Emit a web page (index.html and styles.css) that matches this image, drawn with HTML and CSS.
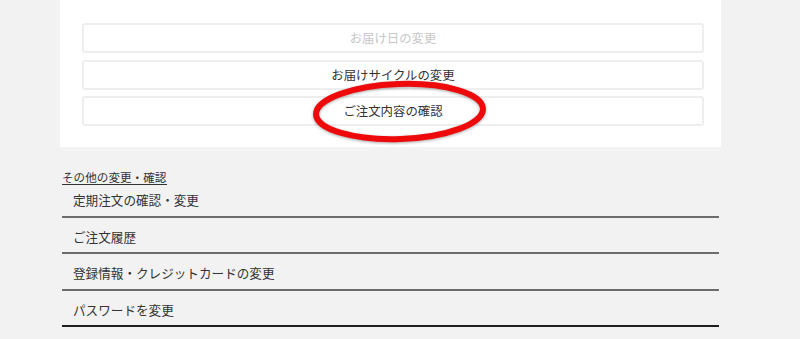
FILE: index.html
```html
<!DOCTYPE html>
<html lang="ja">
<head>
<meta charset="utf-8">
<title>定期注文</title>
<link rel="stylesheet" href="styles.css">
</head>
<body>
<div class="page">
  <div class="card">
    <div class="btn btn-disabled">お届け日の変更</div>
    <div class="btn btn-2">お届けサイクルの変更</div>
    <div class="btn btn-3">ご注文内容の確認</div>
  </div>
  <section class="other">
    <h2 class="other-title">その他の変更・確認</h2>
    <ul class="other-list">
      <li class="other-item">定期注文の確認・変更</li>
      <li class="other-item">ご注文履歴</li>
      <li class="other-item">登録情報・クレジットカードの変更</li>
      <li class="other-item other-item-last">パスワードを変更</li>
    </ul>
  </section>
  <svg class="mark" width="190" height="72" viewBox="0 0 190 72" aria-hidden="true">
    <ellipse cx="94.5" cy="33.5" rx="83.5" ry="27.5" fill="none" stroke="#ee0a0a" stroke-width="6" transform="rotate(-2 94.5 33.5)"/>
  </svg>
</div>
</body>
</html>
```
FILE: styles.css
```css
html, body {
  margin: 0;
  padding: 0;
  background: #f2f2f2;
}
body {
  font-family: "Noto Sans CJK JP", "Noto Sans", sans-serif;
  color: #333;
}
.page {
  position: relative;
  width: 661px;
  margin-left: 60px;
}
.card {
  background: #fff;
  padding: 23px 17px 21px 22px;
  display: flex;
  flex-direction: column;
}
.btn {
  box-sizing: border-box;
  height: 30px;
  border: 2px solid #eeeeee;
  border-radius: 3px;
  display: flex;
  align-items: center;
  justify-content: center;
  font-size: 12.4px;
  line-height: 16px;
  color: #333;
  padding-bottom: 1px;
}
.btn-disabled {
  color: #c8c8c8;
}
.btn-2 {
  margin-top: 7px;
}
.btn-3 {
  margin-top: 6px;
}
.other {
  margin-top: 23px;
  padding: 0 2px;
}
.other-title {
  display: block;
  width: fit-content;
  margin: 0;
  font-size: 11.6px;
  font-weight: normal;
  line-height: 14px;
  border-bottom: 1px solid #333;
  padding: 0 1px 0 0;
  color: #333;
}
.other-list {
  list-style: none;
  margin: 0;
  padding: 0;
}
.other-item {
  padding: 11px 0 7.5px 11px;
  font-size: 12.6px;
  line-height: 16px;
  border-bottom: 2px solid #6c6c6c;
  color: #333;
}
.other-item:first-child {
  padding-top: 7px;
}
.other-item-last {
  border-bottom-color: #1e1e1e;
}
.mark {
  position: absolute;
  left: 245px;
  top: 78px;
  filter: drop-shadow(0 1px 1.5px rgba(0, 0, 0, 0.35));
}
```
